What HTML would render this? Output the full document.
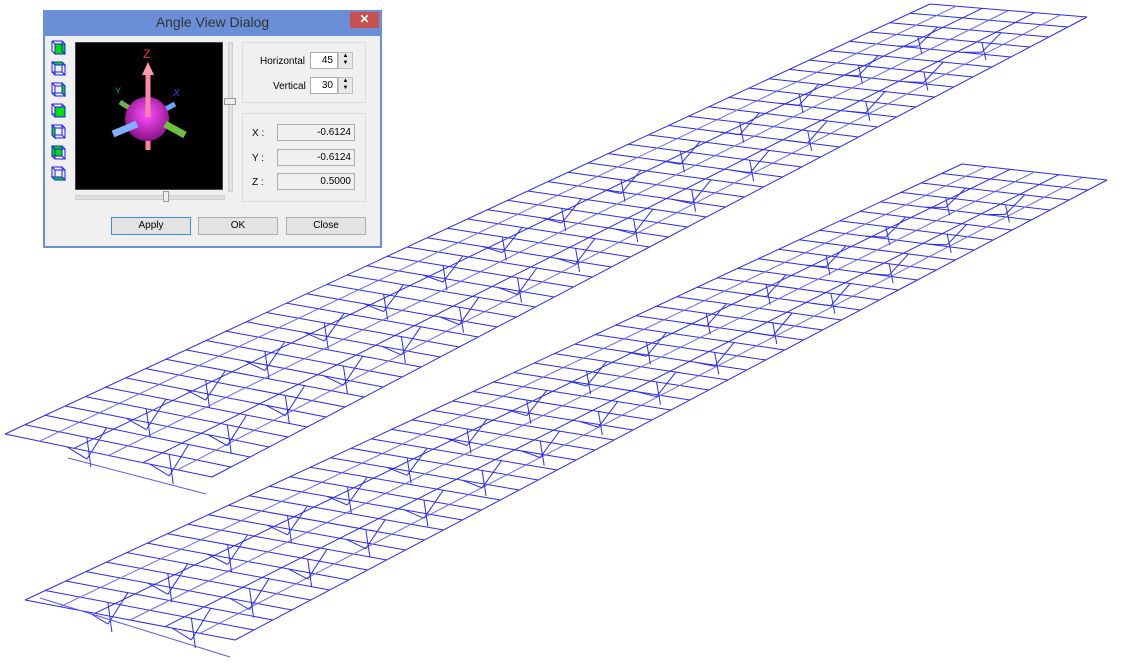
<!DOCTYPE html>
<html><head><meta charset="utf-8"><style>
html,body{margin:0;padding:0;background:#fff;width:1123px;height:665px;overflow:hidden;font-family:"Liberation Sans",sans-serif;}
#wf{position:absolute;left:0;top:0}
.dlg{position:absolute;left:43px;top:10px;width:339px;height:238px;background:#6b8fd6;}
.title{position:absolute;left:0;top:0;width:339px;height:25px;text-align:center;font-size:14px;line-height:24px;color:#333;}
.xbtn{position:absolute;left:307px;top:2px;width:29px;height:16px;background:#c75050;color:#fff;font-size:12px;text-align:center;line-height:15px;font-weight:bold}
.body{position:absolute;left:2px;top:26px;width:335px;height:210px;background:#f0f0f0;}
.abs{position:absolute}
.grp{position:absolute;border:1px solid #dcdcdc;}
.lbl{position:absolute;font-size:10px;color:#000}
.inp{position:absolute;background:#fff;border:1px solid #abadb3;font-size:10px;text-align:right;box-sizing:border-box;padding-right:4px;line-height:15px}
.ro{position:absolute;background:#f0f0f0;border:1px solid #adadad;font-size:10px;text-align:right;box-sizing:border-box;padding-right:3px;line-height:15px}
.spin{position:absolute;width:15px;box-sizing:border-box;border:1px solid #c0c0c0;background:#e8e8e8;font-size:6px;line-height:7px;text-align:center}
.btn{position:absolute;height:18px;background:#e3e3e3;border:1px solid #adadad;box-sizing:border-box;font-size:10px;text-align:center;line-height:16px}
</style></head><body>
<svg id="wf" width="1123" height="665"></svg>
<div class="dlg">
 <div class="title">Angle View Dialog</div>
 <div class="xbtn">✕</div>
 <div class="body">
  <svg class="abs" style="left:6px;top:4px" width="18" height="150">
   <g stroke="#1a1aff" stroke-width="1" fill="none">
    <g transform="translate(1,1)"><rect x="3" y="3" width="10" height="10" fill="#00e000"/><path d="M0 0H10L13 3M0 0V10L3 13M10 0V10L13 13"/><path d="M0 0 3 3" /></g>
    <g transform="translate(1,22)"><path d="M0 0H10V10H0Z M3 3H13V13H3Z M0 0 3 3M10 0 13 3M0 10 3 13M10 10 13 13"/><path d="M0 0H10L13 3H3Z" fill="#00e000"/></g>
    <g transform="translate(1,43)"><path d="M0 0H10V10H0Z M3 3H13V13H3Z M0 0 3 3M10 0 13 3M0 10 3 13M10 10 13 13"/><path d="M10 0 13 3V13L10 10Z" fill="#00e000"/></g>
    <g transform="translate(1,64)"><path d="M0 0H10V10H0Z M3 3H13V13H3Z M0 0 3 3M10 0 13 3M0 10 3 13M10 10 13 13"/><rect x="3" y="3" width="10" height="10" fill="#00e000"/></g>
    <g transform="translate(1,85)"><path d="M0 0H10V10H0Z M3 3H13V13H3Z M0 0 3 3M10 0 13 3M0 10 3 13M10 10 13 13"/><path d="M0 0 3 3V13L0 10Z" fill="#00e000"/></g>
    <g transform="translate(1,106)"><rect x="0" y="0" width="10" height="10" fill="#00e000"/><path d="M0 0H10V10H0Z M3 3H13V13H3Z M0 0 3 3M10 0 13 3M0 10 3 13M10 10 13 13"/></g>
    <g transform="translate(1,127)"><path d="M0 0H10V10H0Z M3 3H13V13H3Z M0 0 3 3M10 0 13 3M0 10 3 13M10 10 13 13"/><path d="M0 10H10L13 13H3Z" fill="#00e000"/></g>
   </g>
  </svg>
  <svg class="abs" style="left:30px;top:6px" width="148" height="148">
   <defs><radialGradient id="sg" cx="0.5" cy="0.4" r="0.6"><stop offset="0" stop-color="#ff50ff"/><stop offset="1" stop-color="#8a108a"/></radialGradient></defs>
   <rect x="0" y="0" width="148" height="148" fill="#000" stroke="#808080"/>
   <line x1="73" y1="77" x2="73" y2="108" stroke="#ff80a0" stroke-width="5"/>
   <line x1="72" y1="77" x2="45" y2="60" stroke="#70b050" stroke-width="5"/>
   <line x1="72" y1="77" x2="100" y2="62" stroke="#6ea0ff" stroke-width="5"/>
   <circle cx="72" cy="77" r="22" fill="url(#sg)"/>
   <line x1="62" y1="82" x2="38" y2="92" stroke="#80b0ff" stroke-width="7"/>
   <line x1="90" y1="82" x2="110" y2="93" stroke="#70c040" stroke-width="7"/>
   <line x1="73" y1="75" x2="73" y2="33" stroke="#ff88a8" stroke-width="5"/>
   <path d="M67 33 73 20 79 33Z" fill="#ff9ab5"/>
   <text x="68" y="16" font-size="12" fill="#ff3030" font-family="Liberation Sans">Z</text>
   <text x="40" y="52" font-size="9" fill="#30b030" font-family="Liberation Sans">Y</text>
   <text x="98" y="54" font-size="10" fill="#4040ff" font-style="italic" font-family="Liberation Sans">X</text>
  </svg>
  <div class="abs" style="left:183px;top:6px;width:3px;height:148px;background:#e0e0e0;border:1px solid #cfcfcf"></div>
  <div class="abs" style="left:179px;top:62px;width:10px;height:5px;background:#eee;border:1px solid #999"></div>
  <div class="abs" style="left:30px;top:159px;width:148px;height:3px;background:#e0e0e0;border:1px solid #cfcfcf"></div>
  <div class="abs" style="left:118px;top:155px;width:4px;height:9px;background:#eee;border:1px solid #999"></div>
  <div class="grp" style="left:197px;top:6px;width:122px;height:59px"></div>
  <div class="lbl" style="left:215px;top:20px">Horizontal</div>
  <div class="inp" style="left:265px;top:16px;width:28px;height:17px">45</div>
  <div class="spin" style="left:293px;top:16px;height:17px">▲<br>▼</div>
  <div class="lbl" style="left:228px;top:45px">Vertical</div>
  <div class="inp" style="left:265px;top:41px;width:28px;height:17px">30</div>
  <div class="spin" style="left:293px;top:41px;height:17px">▲<br>▼</div>
  <div class="grp" style="left:197px;top:77px;width:122px;height:87px"></div>
  <div class="lbl" style="left:207px;top:92px">X :</div>
  <div class="ro" style="left:232px;top:88px;width:78px;height:17px">-0.6124</div>
  <div class="lbl" style="left:207px;top:117px">Y :</div>
  <div class="ro" style="left:232px;top:113px;width:78px;height:17px">-0.6124</div>
  <div class="lbl" style="left:207px;top:141px">Z :</div>
  <div class="ro" style="left:232px;top:137px;width:78px;height:17px">0.5000</div>
  <div class="btn" style="left:66px;top:181px;width:80px;border-color:#3c8ce0">Apply</div>
  <div class="btn" style="left:153px;top:181px;width:80px">OK</div>
  <div class="btn" style="left:241px;top:181px;width:80px">Close</div>
 </div>
</div>
<script>
var svg=document.getElementById('wf'),s='';
function L(a,b,c,d,col){s+='<line x1="'+a.toFixed(1)+'" y1="'+b.toFixed(1)+'" x2="'+c.toFixed(1)+'" y2="'+d.toFixed(1)+'" stroke="'+(col||'#2a2af0')+'" stroke-width="1"/>';}
function deck(A,B,C,D){
 function P(u,v){var x0=A[0]+(D[0]-A[0])*u,y0=A[1]+(D[1]-A[1])*u,x1=B[0]+(C[0]-B[0])*u,y1=B[1]+(C[1]-B[1])*u;return [x0+(x1-x0)*v,y0+(y1-y0)*v];}
 var N=46,M=6,i,j;
 for(i=0;i<=N;i++){var p=P(i/N,0),q=P(i/N,1);L(p[0],p[1],q[0],q[1]);}
 for(j=0;j<=M;j++){var p=P(0,j/M),q=P(1,j/M);L(p[0],p[1],q[0],q[1],j%2?'#6b6bf0':'#2a2af0');}
 for(i=1;i<N;i+=3){var sc=1-i/N*0.6,h=22*sc;
  [0.3,0.7].forEach(function(v){var a=P((i-1)/N,v),b=P((i+1)/N,v),m=P(i/N,v);
   L(a[0],a[1],m[0],m[1]+h);L(b[0],b[1],m[0],m[1]+h);L(m[0],m[1],m[0]+4,m[1]+h+8);});
 }
}
deck([5,434],[212,477],[1087,17],[930,4]);
deck([25,600],[235,640],[1107,180],[962,164]);
L(68,458,206,494,'#5a5af0');L(40,598,230,657,'#5a5af0');
svg.innerHTML=s;
</script>
</body></html>
